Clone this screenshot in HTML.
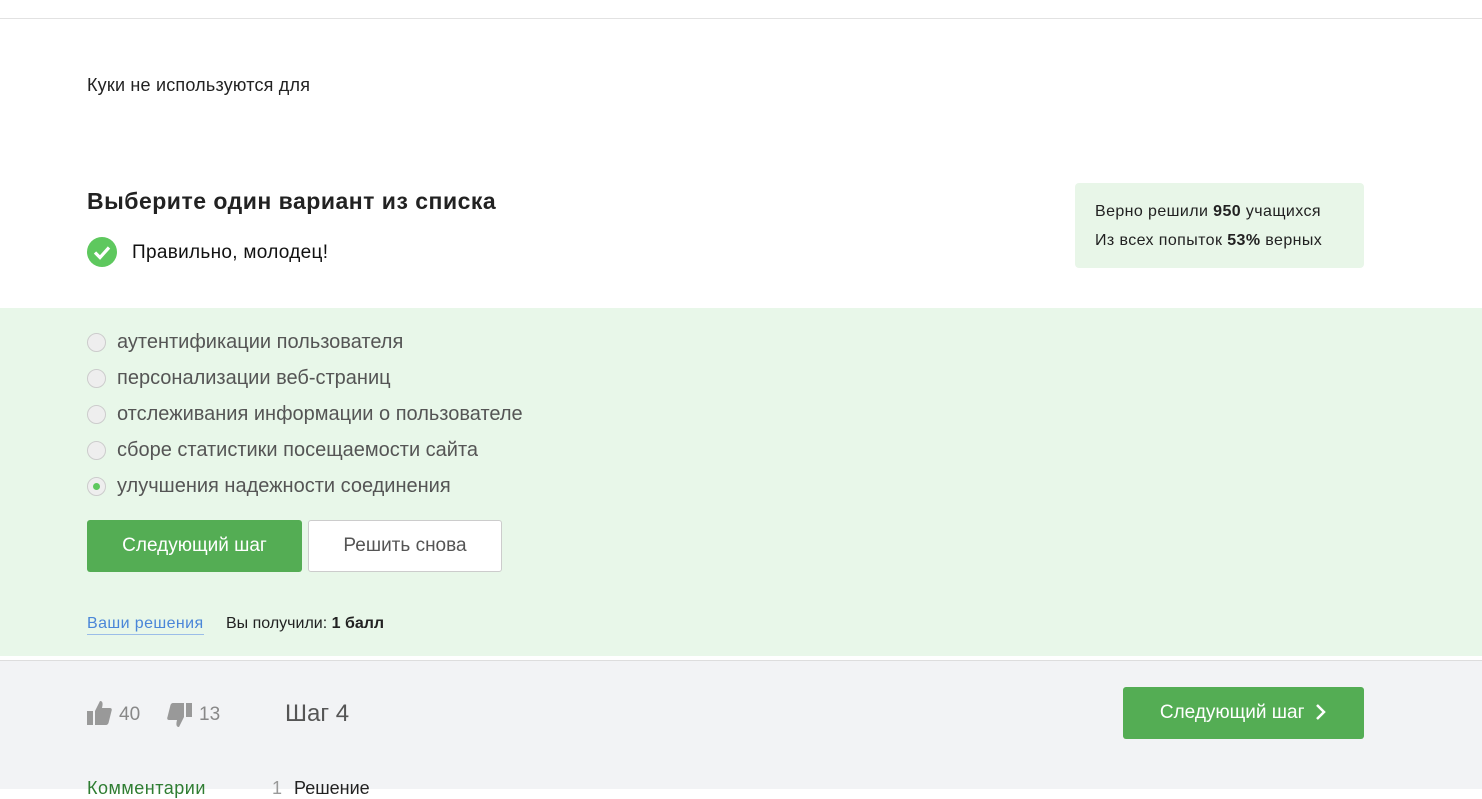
<!DOCTYPE html>
<html><head><meta charset="utf-8"><style>
body{margin:0;width:1482px;height:788px;overflow:hidden;font-family:"Liberation Sans",sans-serif;background:#fff;position:relative;color:#222}
.a{position:absolute}
.opt{position:absolute;left:87px;font-size:20px;color:#555;display:flex;align-items:center}
.rad{width:19px;height:19px;border-radius:50%;border:1px solid #ccc;background:#eee;box-sizing:border-box;margin-right:11px;position:relative}
</style></head><body>
<div class="a" style="top:18px;left:0;width:1482px;height:1px;background:#e2e2e2"></div>
<div class="a" style="left:87px;top:75px;font-size:18px;letter-spacing:0.2px">Куки не используются для</div>
<div class="a" style="left:87px;top:188px;font-size:23px;font-weight:bold;color:#222;letter-spacing:0.5px">Выберите один вариант из списка</div>
<svg class="a" style="left:87px;top:237px" width="30" height="30"><circle cx="15" cy="15" r="15" fill="#5ec85e"/><path d="M8 15.5l5 5 9-10" stroke="#fff" stroke-width="3.2" fill="none"/></svg>
<div class="a" style="left:132px;top:242px;font-size:19px;color:#111;letter-spacing:0.3px">Правильно, молодец!</div>
<div class="a" style="left:1075px;top:183px;width:289px;height:85px;background:#e8f6e8;border-radius:4px;font-size:16px;line-height:29px;box-sizing:border-box;padding:14px 20px;color:#222;letter-spacing:0.4px">Верно решили <b>950</b> учащихся<br>Из всех попыток <b>53%</b> верных</div>
<div class="a" style="left:0;top:308px;width:1482px;height:348px;background:#e8f7e9"></div>
<div class="opt" style="top:331px"><span class="rad"></span>аутентификации пользователя</div>
<div class="opt" style="top:367px"><span class="rad"></span>персонализации веб-страниц</div>
<div class="opt" style="top:403px"><span class="rad"></span>отслеживания информации о пользователе</div>
<div class="opt" style="top:439px"><span class="rad"></span>сборе статистики посещаемости сайта</div>
<div class="opt" style="top:475px"><span class="rad"><span style="position:absolute;left:5px;top:5px;width:7px;height:7px;border-radius:50%;background:#5ec85e"></span></span>улучшения надежности соединения</div>
<div class="a" style="left:87px;top:520px;width:215px;height:52px;background:#54ad54;border-radius:3px;color:#fff;font-size:19px;line-height:52px;text-align:center">Следующий шаг</div>
<div class="a" style="left:308px;top:520px;width:194px;height:52px;background:#fff;border:1px solid #ccc;box-sizing:border-box;border-radius:3px;color:#555;font-size:19px;line-height:50px;text-align:center">Решить снова</div>
<div class="a" style="left:87px;top:614px;font-size:16px;color:#4a86d8;border-bottom:1px solid #9bbde8;line-height:20px;letter-spacing:0.4px">Ваши решения</div>
<div class="a" style="left:226px;top:614px;font-size:16px;color:#222;line-height:20px">Вы получили: <b>1 балл</b></div>
<div class="a" style="left:0;top:660px;width:1482px;height:128px;background:#f2f3f5;border-top:1px solid #ddd"></div>
<svg class="a" style="left:87px;top:700px" width="26" height="26" viewBox="0 0 26 26"><rect x="0" y="11" width="6" height="14" fill="#999"/><path d="M8 11l5-10c3 0 3 3 2 7h8c2 0 2 2 1.5 3l-3 12c-.5 1-1 2-3 2H8z" fill="#999"/></svg>
<div class="a" style="left:119px;top:704px;font-size:19px;color:#888">40</div>
<svg class="a" style="left:166px;top:702px" width="26" height="26" viewBox="0 0 26 26"><g transform="translate(0,26) scale(1,-1)"><rect x="20" y="11" width="6" height="14" fill="#999"/><path d="M18 11l-5-10c-3 0-3 3-2 7H3c-2 0-2 2-1.5 3l3 12c.5 1 1 2 3 2H18z" fill="#999"/></g></svg>
<div class="a" style="left:199px;top:704px;font-size:19px;color:#888">13</div>
<div class="a" style="left:285px;top:700px;font-size:24px;color:#555">Шаг 4</div>
<div class="a" style="left:1123px;top:687px;width:241px;height:52px;background:#54ad54;border-radius:3px;color:#fff;font-size:19px;line-height:52px;text-align:center">Следующий шаг &nbsp;<svg width="12" height="16" style="vertical-align:-2px"><path d="M2 1l7 7-7 7" stroke="#fff" stroke-width="2.5" fill="none"/></svg></div>
<div class="a" style="left:87px;top:778px;font-size:18px;color:#2f7d32;letter-spacing:0.5px">Комментарии</div>
<div class="a" style="left:272px;top:778px;font-size:18px;color:#999">1</div>
<div class="a" style="left:294px;top:778px;font-size:18px;color:#222">Решение</div>
</body></html>
